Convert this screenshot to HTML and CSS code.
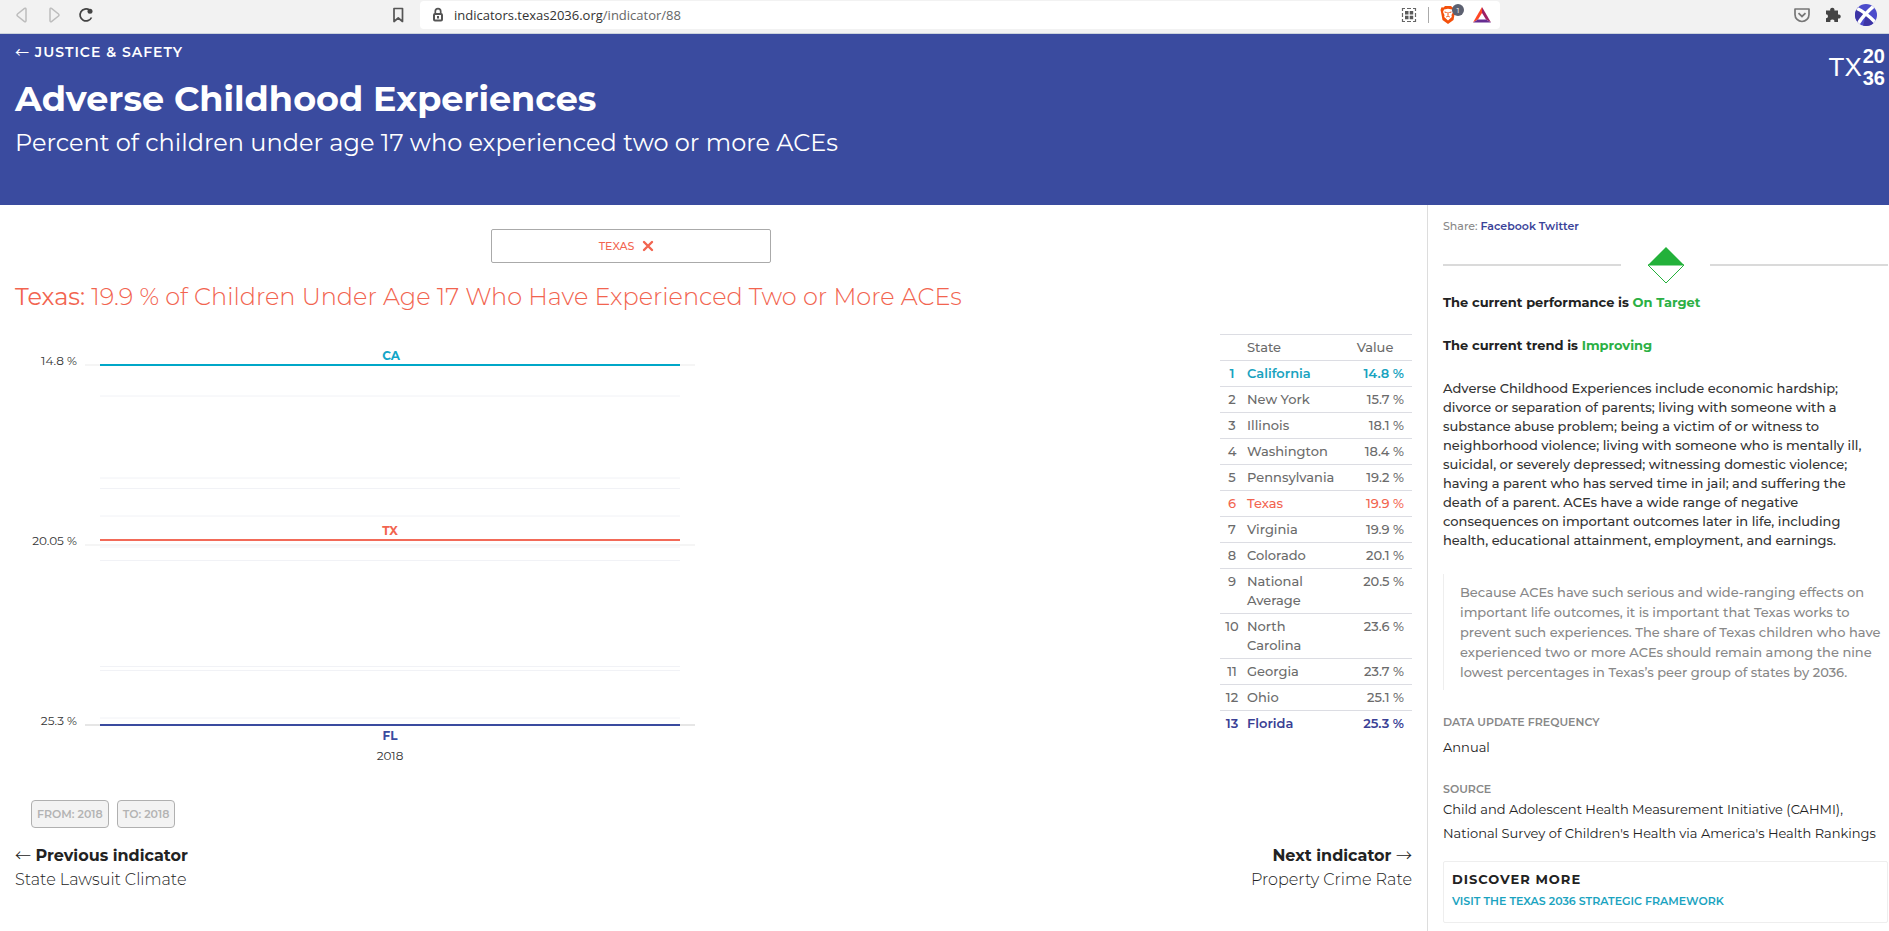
FILE: index.html
```html
<!DOCTYPE html>
<html lang="en">
<head>
<meta charset="utf-8">
<title>Adverse Childhood Experiences</title>
<link rel="stylesheet" href="styles.css">
</head>
<body>
<nav class="browser" aria-label="Browser toolbar">
  <div class="browser-left">
    <button class="tool" aria-label="Back"><svg width="16" height="18" viewBox="0 0 16 18"><path d="M12 3v12a1 1 0 0 1-1.500.700L3.500 10a1.300 1.300 0 0 1 0-2l7-5.700A1 1 0 0 1 12 3z" fill="none" stroke="#bdbdbd" stroke-width="1.500"/></svg></button>
    <button class="tool" aria-label="Forward"><svg width="16" height="18" viewBox="0 0 16 18"><path d="M4 3v12a1 1 0 0 0 1.500.700L12.500 10a1.300 1.300 0 0 0 0-2l-7-5.700A1 1 0 0 0 4 3z" fill="none" stroke="#bdbdbd" stroke-width="1.500"/></svg></button>
    <button class="tool" aria-label="Reload"><svg width="16" height="18" viewBox="0 0 16 18"><path d="M13.500 11.500A6 6 0 1 1 11.500 4" fill="none" stroke="#444" stroke-width="1.700"/><circle cx="12" cy="5.200" r="2.500" fill="#444"/></svg></button>
    <button class="tool bookmark" aria-label="Bookmark"><svg width="16" height="18" viewBox="0 0 16 18"><path d="M4 2.500h8.500v13L8.250 12 4 15.500z" fill="none" stroke="#555" stroke-width="1.700" stroke-linejoin="round"/></svg></button>
  </div>
  <div class="address">
    <svg width="12" height="16" viewBox="0 0 12 16"><path d="M3.300 7V4.300a2.700 2.700 0 0 1 5.400 0V7" fill="none" stroke="#555" stroke-width="1.700"/><rect x="2" y="7" width="8" height="6.500" fill="none" stroke="#555" stroke-width="2" rx="1"/><rect x="5" y="9" width="2" height="2.500" fill="#555"/></svg>
    <span class="url">indicators.texas2036.org<span class="url-path">/indicator/88</span></span>
    <span class="address-tools">
      <svg width="16" height="16" viewBox="0 0 16 16"><path d="M1.500 4V1.500H4M6 1.500h4M12 1.500h2.500V4M14.500 6v4M14.500 12v2.500H12M10 14.500H6M4 14.500H1.500V12M1.500 10V6" fill="none" stroke="#666" stroke-width="1.200"/><path d="M4 4h3.500v3.500H4zM8.700 4h3.500v3.500H8.700zM4 8.700h3.500v3.500H4zM8.700 8.700h3.500v3.500H8.700z" fill="#5a5a5a"/></svg>
      <span class="rule"></span>
      <span class="shield">
        <svg width="16" height="20" viewBox="0 0 16 20"><path d="M5 1h6l1.500 1.500 2-.200L15.500 5l-.500 2-1.500 8L8 19l-5.500-4L1 7 .500 5l1-2.700 2 .200z" fill="#f4500b"/><path d="M4 4.500l4-.700 4 .700 1 2.500-1.500 3 .300 2L8 15.500 4.200 12l.300-2L3 7z" fill="#fff"/><path d="M4.500 7l2.200.500M11.500 7l-2.200.500M8 7v3.500M6.200 12L8 11l1.800 1" stroke="#f4500b" fill="none"/></svg>
        <span class="count">1</span>
      </span>
      <svg class="bat" width="18" height="16" viewBox="0 0 18 16"><path d="M9 0L0 15.500l5-3L9 6z" fill="#ff4724"/><path d="M9 0l9 15.500-5-3L9 6z" fill="#9e1f63"/><path d="M0 15.500h18l-5-3H5z" fill="#662d91"/></svg>
    </span>
  </div>
  <div class="browser-right">
    <button class="tool" aria-label="Pocket"><svg width="18" height="18" viewBox="0 0 18 18"><path d="M2 3h14v5.500a7 7 0 0 1-14 0z" fill="none" stroke="#777" stroke-width="1.700" stroke-linejoin="round"/><path d="M5.500 7.200L9 10.500l3.500-3.300" fill="none" stroke="#777" stroke-width="1.800"/></svg></button>
    <button class="tool" aria-label="Extensions"><svg width="18" height="18" viewBox="0 0 18 18"><path d="M2 4.500h4.200a2.200 2.200 0 1 1 4.200 0H14v4a2.100 2.100 0 1 1 0 4V16h-3.700a2 2 0 1 0-3.900 0H2v-3.800a2 2 0 1 0 0-4z" fill="#444"/></svg></button>
    <button class="tool" aria-label="Profile"><svg width="22" height="22" viewBox="0 0 22 22"><defs><clipPath id="disc"><circle cx="11" cy="11" r="11"/></clipPath></defs><g clip-path="url(#disc)"><rect width="22" height="22" fill="#4c4ccb"/><path d="M0 0l11 11L0 22zM11 11l11 11H8z" fill="#3d35a5"/><path d="M1 4c7 3 13 8 19 14" stroke="#fff" stroke-width="3.500" fill="none"/><path d="M20 1C13 7 7 13 3 20" stroke="#fff" stroke-width="3.500" fill="none"/></g></svg></button>
  </div>
</nav>

<header class="banner">
  <div>
    <a class="crumb" href="#"><span class="arrow">←</span> JUSTICE &amp; SAFETY</a>
    <h1>Adverse Childhood Experiences</h1>
    <p class="lede">Percent of children under age 17 who experienced two or more ACEs</p>
  </div>
  <a class="brand" href="#" aria-label="Texas 2036">
    <span class="brand-tx">TX</span>
    <span class="brand-year"><span>20</span><span>36</span></span>
  </a>
</header>

<div class="layout">
  <main class="main">
    <div class="picker">
      <button class="region">TEXAS <svg width="12" height="12" viewBox="0 0 12 12"><path d="M2 2l8 8M10 2l-8 8" stroke="#f2644f" stroke-width="2.400" stroke-linecap="round"/></svg></button>
    </div>
    <h2><strong>Texas:</strong> 19.9 % of Children Under Age 17 Who Have Experienced Two or More ACEs</h2>

    <div class="data">
      <svg class="chart" width="700" height="450" viewBox="0 0 700 450" role="img" aria-label="Share by state, 2018">
        <g class="axis"><path d="M70 31h610M70 211h610"/><path class="base" d="M70 391h610"/></g>
        <path class="peers" d="M85 62h580M85 144h580M85 154.500h580M85 182h580M85 213h580M85 226.500h580M85 332.500h580M85 336.500h580M85 384h580"/>
        <path class="line ca" d="M85 31h580"/>
        <path class="line tx" d="M85 206h580"/>
        <path class="line fl" d="M85 391h580"/>
        <g class="ticks"><text x="62" y="31">14.8 %</text><text x="62" y="211">20.05 %</text><text x="62" y="391">25.3 %</text></g>
        <g class="names"><text class="ca" x="376" y="26">CA</text><text class="tx" x="375" y="201">TX</text><text class="fl" x="375" y="406">FL</text></g>
        <text class="year" x="375" y="426">2018</text>
      </svg>
      <table class="ranks">
        <colgroup><col class="c-rank"><col class="c-state"><col class="c-value"></colgroup>
        <thead><tr><th></th><th>State</th><th>Value</th></tr></thead>
        <tbody>
          <tr class="ca"><td>1</td><td>California</td><td>14.8 %</td></tr>
          <tr><td>2</td><td>New York</td><td>15.7 %</td></tr>
          <tr><td>3</td><td>Illinois</td><td>18.1 %</td></tr>
          <tr><td>4</td><td>Washington</td><td>18.4 %</td></tr>
          <tr><td>5</td><td>Pennsylvania</td><td>19.2 %</td></tr>
          <tr class="tx"><td>6</td><td>Texas</td><td>19.9 %</td></tr>
          <tr><td>7</td><td>Virginia</td><td>19.9 %</td></tr>
          <tr><td>8</td><td>Colorado</td><td>20.1 %</td></tr>
          <tr><td>9</td><td>National Average</td><td>20.5 %</td></tr>
          <tr><td>10</td><td>North<br>Carolina</td><td>23.6 %</td></tr>
          <tr><td>11</td><td>Georgia</td><td>23.7 %</td></tr>
          <tr><td>12</td><td>Ohio</td><td>25.1 %</td></tr>
          <tr class="fl"><td>13</td><td>Florida</td><td>25.3 %</td></tr>
        </tbody>
      </table>
    </div>

    <div class="range">
      <button disabled>FROM: 2018</button>
      <button disabled>TO: 2018</button>
    </div>

    <div class="pager">
      <a href="#"><b><span class="arrow">←</span> Previous indicator</b><span>State Lawsuit Climate</span></a>
      <a class="next" href="#"><b>Next indicator <span class="arrow">→</span></b><span>Property Crime Rate</span></a>
    </div>
  </main>

  <aside class="side">
    <p class="share">Share: <a href="#">Facebook</a> <a href="#">Twitter</a></p>
    <div class="divider"><svg width="38" height="38" viewBox="0 0 38 38"><path d="M1 19L19 1l18 18z" fill="#23b13a"/><path d="M1 19l18 18 18-18z" fill="#fff" stroke="#23b13a"/></svg></div>
    <p class="status">The current performance is <em>On Target</em></p>
    <p class="status">The current trend is <em>Improving</em></p>
    <p class="about">Adverse Childhood Experiences include economic hardship;<br>divorce or separation of parents; living with someone with a<br>substance abuse problem; being a victim of or witness to<br>neighborhood violence; living with someone who is mentally ill,<br>suicidal, or severely depressed; witnessing domestic violence;<br>having a parent who has served time in jail; and suffering the<br>death of a parent. ACEs have a wide range of negative<br>consequences on important outcomes later in life, including<br>health, educational attainment, employment, and earnings.</p>
    <blockquote>Because ACEs have such serious and wide-ranging effects on<br>important life outcomes, it is important that Texas works to<br>prevent such experiences. The share of Texas children who have<br>experienced two or more ACEs should remain among the nine<br>lowest percentages in Texas’s peer group of states by 2036.</blockquote>
    <h3>DATA UPDATE FREQUENCY</h3>
    <p class="fact">Annual</p>
    <h3>SOURCE</h3>
    <p class="fact">Child and Adolescent Health Measurement Initiative (CAHMI),<br>National Survey of Children's Health via America's Health Rankings</p>
    <section class="more">
      <h4>DISCOVER MORE</h4>
      <a href="#">VISIT THE TEXAS 2036 STRATEGIC FRAMEWORK</a>
    </section>
  </aside>
</div>
</body>
</html>
```

FILE: styles.css
```css
* { box-sizing: border-box; }
body {
  margin: 0;
  min-height: 100vh;
  display: flex;
  flex-direction: column;
  background: #fff;
  color: #222;
  font-family: Montserrat, Inter, sans-serif;
  font-size: 13px;
}
h1, h2, h3, h4, p, blockquote { margin: 0; }
a { color: inherit; text-decoration: none; }
button { font: inherit; }
svg { display: block; }
.arrow { font-family: "Noto Sans CJK JP", "DejaVu Sans", sans-serif; font-weight: 400; line-height: 1; }

/* browser toolbar */
.browser {
  display: flex;
  height: 34px;
  background: #f2f2f2;
  border-bottom: 1px solid #ccd3dc;
}
.browser-left { display: flex; align-items: center; width: 420px; padding: 0 14px 4px; gap: 16px; flex: none; }
.browser-right { display: flex; align-items: center; margin-left: auto; padding: 0 12px 4px 0; gap: 13px; }
.tool { border: 0; background: none; padding: 0; }
.bookmark { margin-left: auto; }
.address {
  display: flex;
  align-items: center;
  flex: 0 1 1080px;
  height: 28px;
  margin-top: 1px;
  padding: 0 9px 0 12px;
  gap: 10px;
  background: #fff;
  border-radius: 4px;
}
.url { font: 13px/20px "Open Sans", sans-serif; color: #333; }
.url-path { color: #666; }
.address-tools { display: flex; align-items: center; margin-left: auto; gap: 11px; }
.rule { width: 1px; height: 16px; background: #aaa; }
.shield { position: relative; }
.count {
  position: absolute;
  left: 12px;
  top: -1px;
  width: 12px;
  height: 12px;
  border-radius: 6px;
  background: #5c6070;
  color: #fff;
  font-size: 8px;
  line-height: 12px;
  text-align: center;
}
.bat { margin-left: 6px; }

/* page banner */
.banner {
  display: flex;
  justify-content: space-between;
  padding: 8px 4px 44px 15px;
  background: #3a4b9f;
  color: #fff;
}
.crumb { display: block; font-size: 14px; line-height: 20px; font-weight: 600; letter-spacing: 1px; }
h1 { margin-top: 15px; font-size: 35px; line-height: 44px; font-weight: 700; }
.lede { margin-top: 4px; font-size: 24px; line-height: 36px; }
.brand { display: flex; align-items: center; gap: 1px; height: 50px; font-family: "Liberation Sans", sans-serif; }
.brand-tx { font-size: 26px; line-height: 44px; }
.brand-year { display: flex; flex-direction: column; font-size: 20px; line-height: 22px; font-weight: 700; }

/* columns */
.layout { display: flex; flex: 1; }
.main { flex: 1; min-width: 0; padding: 24px 15px 20px; }
.side { flex: none; width: 462px; border-left: 1px solid #ddd; padding: 11px 1px 9px 15px; }

.picker { display: flex; justify-content: center; padding-right: 166px; }
.region {
  display: flex;
  align-items: center;
  justify-content: center;
  gap: 8px;
  width: 280px;
  height: 34px;
  padding: 0 12px 0 4px;
  background: #fff;
  border: 1px solid #aaa;
  border-radius: 2px;
  color: #f2644f;
  font-size: 11px;
  font-weight: 500;
}
h2 { margin-top: 16px; font-size: 24px; line-height: 36px; font-weight: 300; color: #f2644f; }
h2 strong { font-weight: 400; }

.data { display: flex; justify-content: space-between; align-items: flex-start; margin-top: 19px; }
.chart text { font-size: 12px; fill: #333; }
.chart .ticks text { text-anchor: end; }
.chart .year { text-anchor: middle; }
.chart .names text { text-anchor: middle; font-weight: 700; }
.chart .names .ca { fill: #12a5c8; }
.chart .names .tx { fill: #f2644f; }
.chart .names .fl { fill: #3a4b9f; }
.axis path { stroke: #f5f5f5; stroke-width: 2; }
.axis .base { stroke: #e6e6e6; }
.peers { stroke: #f1f2f6; fill: none; }
.line { stroke-width: 2; }
.line.ca { stroke: #00a7c8; }
.line.tx { stroke: #f26a58; }
.line.fl { stroke: #3a4b9f; }

.ranks { width: 192px; table-layout: fixed; border-collapse: collapse; color: #6b6b6b; line-height: 19px; }
.c-rank { width: 24px; }
.c-value { width: 74px; }
.ranks th, .ranks td { padding: 3px; border-top: 1px solid #dcdde3; vertical-align: top; font-weight: 500; text-align: left; }
.ranks td:first-child { padding: 3px 0; text-align: center; }
.ranks th:last-child { text-align: center; }
.ranks td:last-child { padding-right: 8px; text-align: right; }
.ranks .ca td { color: #1aa3c0; font-weight: 600; }
.ranks .tx td { color: #f2644f; }
.ranks .fl td { color: #3a3f95; font-weight: 600; }

.range { display: flex; gap: 8px; margin-top: 16px; padding-left: 16px; }
.range button {
  height: 28px;
  padding: 0 5px;
  border: 1px solid #b0b0b0;
  border-radius: 4px;
  background: #f3f3f3;
  color: #b3b3b3;
  font-size: 11px;
  font-weight: 600;
}
.pager { display: flex; justify-content: space-between; margin-top: 16px; font-size: 16px; line-height: 24px; }
.pager a { display: flex; flex-direction: column; }
.pager b { font-weight: 700; }
.pager span { font-weight: 300; }
.pager .next { text-align: right; }

/* sidebar */
.share { font-size: 11px; line-height: 20px; font-weight: 500; color: #888; }
.share a { color: #3a4399; font-weight: 600; }
.divider { display: grid; grid-template-columns: 2fr 1fr 2fr; align-items: center; justify-items: center; margin-top: 10px; }
.divider::before, .divider::after { content: ""; width: 100%; height: 2px; background: #dadada; }
.status { margin-top: 8px; line-height: 20px; font-weight: 700; }
.status + .status { margin-top: 23px; }
.status em { font-style: normal; color: #2bb044; }
.about { margin-top: 24px; line-height: 19px; font-weight: 500; color: #333; }
blockquote { margin: 24px 0 23px; padding: 8px 0 8px 16px; border-left: 1px solid #eee; line-height: 20px; font-weight: 500; color: #888; }
h3 { font-size: 11px; line-height: 18px; font-weight: 600; color: #888; }
.fact { line-height: 24px; font-weight: 400; }
h3 + .fact { margin-top: 4px; }
.fact + h3 { margin-top: 21px; }
.fact + h3 + .fact { margin-top: -1px; }
.more { margin-top: 16px; padding: 6px 8px 10px; border: 1px solid #eee; border-radius: 2px; }
h4 { font-size: 13px; line-height: 22px; font-weight: 700; letter-spacing: 1px; }
.more a { display: block; font-size: 11px; line-height: 22px; font-weight: 600; color: #1aa3c0; }
```
